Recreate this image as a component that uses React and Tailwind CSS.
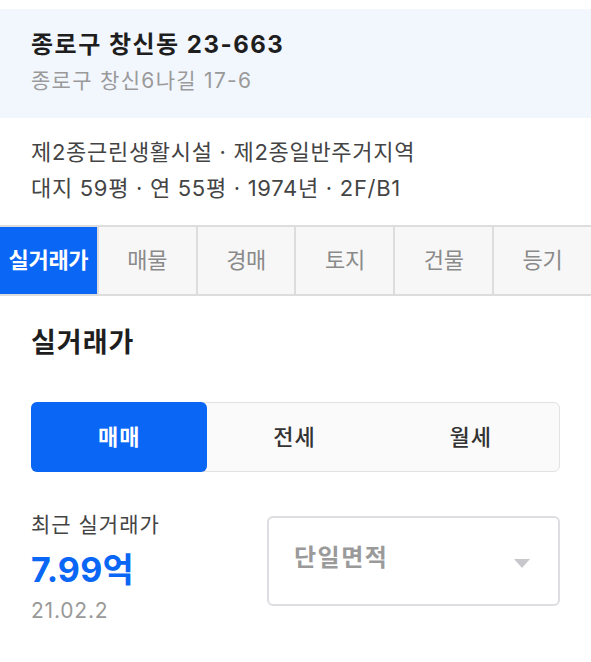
import { useState } from 'react';
import clsx from 'clsx';

const TABS = ['실거래가', '매물', '경매', '토지', '건물', '등기'];
const DEALS = ['매매', '전세', '월세'];

export default function App() {
  const [tab, setTab] = useState('실거래가');
  const [deal, setDeal] = useState('매매');

  return (
    <div
      className="w-[591px] min-h-[662px] bg-white text-[#222]"
      style={{ fontFamily: 'Inter, "Noto Sans CJK KR", "Noto Sans", sans-serif' }}
    >
      {/* Address header */}
      <div className="mt-[9px] h-[109px] bg-[#f2f6fd] px-[31px] pt-[20px]">
        <h1 className="text-[24px] leading-[32px] font-bold text-[#1e1e1e] tracking-[1.5px]">
          종로구 창신동 23-663
        </h1>
        <p className="mt-[5px] text-[21px] leading-[30px] text-[#9a9a9a] tracking-[1.3px]">
          종로구 창신6나길 17-6
        </p>
      </div>

      {/* Summary */}
      <div className="px-[31px] pt-[16px] text-[22px] leading-[36px] text-[#444] tracking-[0.7px]">
        <p>제2종근린생활시설 · 제2종일반주거지역</p>
        <p>대지 59평 · 연 55평 · 1974년 · 2F/B1</p>
      </div>

      {/* Tabs */}
      <div className="mt-[19px] flex h-[71px] border-y-2 border-[#dddddd] bg-[#f7f7f7]">
        {TABS.map((t, i) => (
          <button
            key={t}
            onClick={() => setTab(t)}
            className={clsx(
              'flex-1 flex items-center justify-center text-[22px] tracking-[-0.3px]',
              i > 0 && 'border-l-2 border-[#dddddd]',
              tab === t ? 'bg-[#0a66f5] text-white font-bold' : 'text-[#8a8a8a]'
            )}
          >
            {t}
          </button>
        ))}
      </div>

      {/* Real transaction price */}
      <div className="px-[31px]">
        <h2 className="mt-[31px] text-[27px] leading-[32px] font-bold text-[#1e1e1e] tracking-[1px]">실거래가</h2>

        <div className="mt-[43px] flex h-[70px] w-[529px] rounded-[6px] border border-[#e2e2e2] bg-[#fafafa]">
          {DEALS.map((d) => (
            <button
              key={d}
              onClick={() => setDeal(d)}
              className={clsx(
                'flex-1 flex items-center justify-center rounded-[6px] text-[22px] tracking-[1px]',
                deal === d ? 'bg-[#0a66f5] text-white font-bold -m-px' : 'text-[#333] font-medium'
              )}
            >
              {d}
            </button>
          ))}
        </div>

        <div className="mt-[39px] flex items-start justify-between">
          <div>
            <p className="text-[21px] leading-[28px] text-[#444] tracking-[1px]">최근 실거래가</p>
            <p className="mt-[9px] text-[34px] leading-[44px] font-bold text-[#0a66f5] tracking-[0.2px]">
              7.99억
            </p>
            <p className="mt-[5px] text-[21px] leading-[28px] text-[#999] tracking-[0.8px]">21.02.2</p>
          </div>

          <div className="mt-[5px] flex h-[90px] w-[293px] items-center justify-between rounded-[6px] border-2 border-[#dedee2] pl-[25px] pr-[28px]">
            <span className="-mt-[6px] text-[24px] font-bold text-[#9a9a9a] tracking-[1.5px]">단일면적</span>
            <svg width="16" height="9" viewBox="0 0 16 9" className="mt-[4px]">
              <path d="M0 0h16L8 9z" fill="#c8c8cc" />
            </svg>
          </div>
        </div>
      </div>
    </div>
  );
}
